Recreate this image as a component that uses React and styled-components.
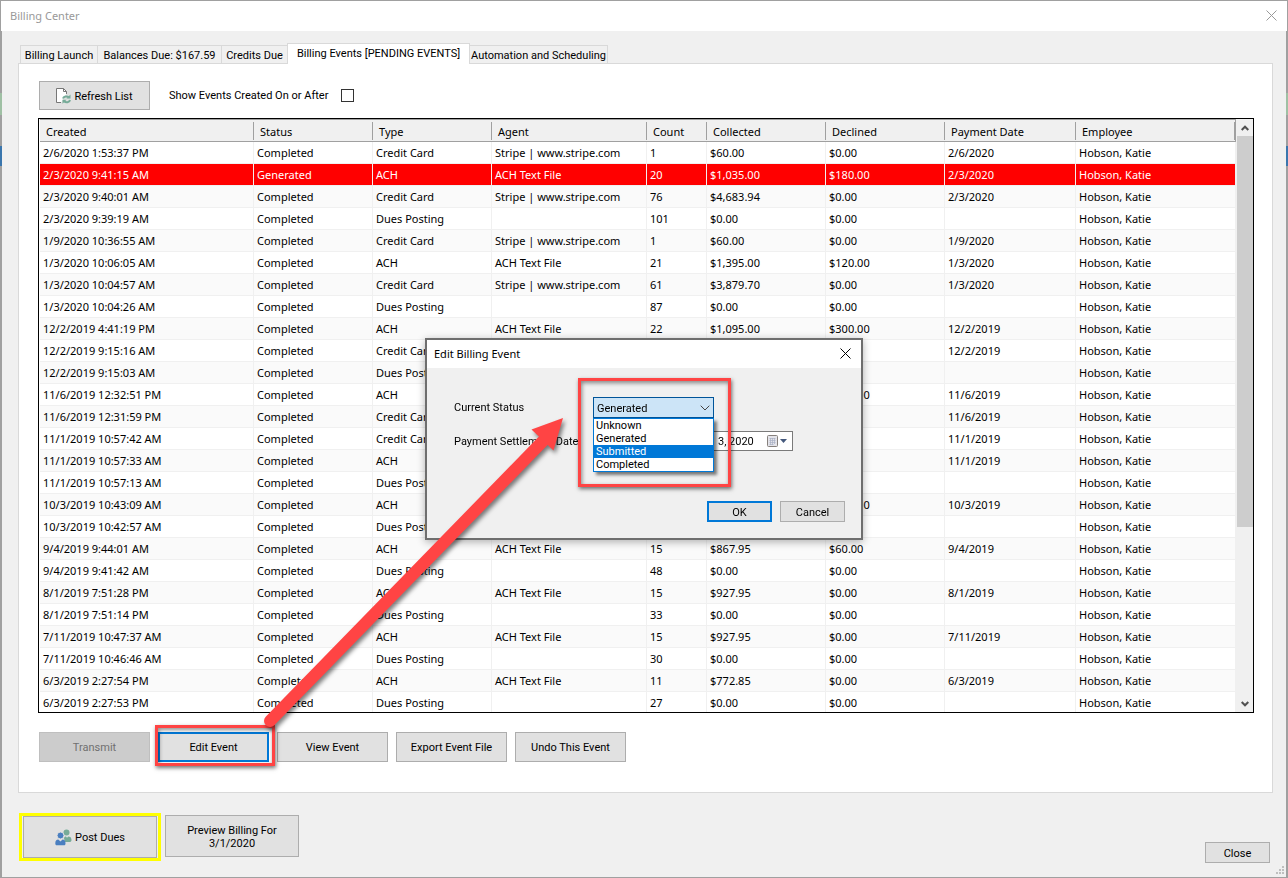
import React, { useState } from 'react';
import styled, { createGlobalStyle, css } from 'styled-components';

const GlobalStyle = createGlobalStyle`
  * {
    box-sizing: border-box;
  }

  body {
    margin: 0;
    color: #000;
    font: 11px/16px 'Noto Sans', sans-serif;
  }
`;

const uiFont = `
  font-family: 'Roboto', sans-serif;
  font-size: 11px;
  line-height: 13px;
`;

const Window = styled.div`
  position: relative;
  display: flex;
  flex-direction: column;
  height: 100vh;
  min-width: 900px;
  background: linear-gradient(
    #a0a0a0 92px,
    #9fc0a4 92px 114px,
    #a0a0a0 114px 145px,
    #3a76ad 145px 165px,
    #a0a0a0 165px
  );
  border-top: 1px solid #a0a0a0;
  border-bottom: 1px solid #a0a0a0;
`;

const TitleBar = styled.header`
  display: flex;
  justify-content: space-between;
  align-items: center;
  flex: none;
  height: 30px;
  margin: 0 1px;
  padding: 0 10px 0 9px;
  background: #fff;
  color: #999;
`;

const Title = styled.h1`
  margin: 0;
  font-size: 11px;
  font-weight: 400;
`;

const IconButton = styled.button`
  display: flex;
  padding: 0 0 2px;
  border: 0;
  background: none;
  color: inherit;
`;

const Body = styled.main`
  display: flex;
  flex-direction: column;
  flex: 1;
  min-height: 0;
  margin: 0 2px;
  padding: 12px 13px 14px 16px;
  background: #f0f0f0;
`;

const TabList = styled.div`
  display: flex;
  align-items: flex-end;
  padding-left: 2px;
`;

const Tab = styled.button`
  ${uiFont}
  flex: none;
  width: ${({ $width }) => $width}px;
  height: 18px;
  margin: 0 0 0 -1px;
  padding: 2px 0 0;
  border: 1px solid #d9d9d9;
  border-bottom: 0;
  background: #f0f0f0;
  color: #000;
  white-space: nowrap;

  &:first-child {
    margin-left: 0;
  }

  ${({ $active }) =>
    $active &&
    css`
      z-index: 1;
      height: 21px;
      margin-bottom: -1px;
      padding-bottom: 3px;
      background: #fff;
    `}
`;

const Panel = styled.section`
  display: flex;
  flex-direction: column;
  flex: 1;
  min-height: 0;
  padding: 17px 18px 30px 19px;
  border: 1px solid #d9d9d9;
  background: #fff;
`;

const Toolbar = styled.div`
  display: flex;
  align-items: center;
  gap: 19px;
  margin: 0 0 8px 1px;
`;

const Button = styled.button`
  ${uiFont}
  display: flex;
  justify-content: center;
  align-items: center;
  gap: 3px;
  flex: none;
  width: ${({ $width = 111 }) => $width}px;
  height: ${({ $height = 30 }) => $height}px;
  padding: 1px 0 0;
  border: 1px solid #adadad;
  background: #e1e1e1;
  color: #000;

  ${({ $primary }) =>
    $primary &&
    css`
      border: 2px solid #0078d7;
    `}

  &:disabled {
    border-color: #bfbfbf;
    background: #ccc;
    color: #707070;
  }
`;

const CheckLabel = styled.label`
  ${uiFont}
  display: flex;
  align-items: center;
  gap: 13px;
`;

const Checkbox = styled.input`
  appearance: none;
  width: 13px;
  height: 13px;
  margin: 0;
  border: 1px solid #333;
  background: #fff;
`;

const ListFrame = styled.div`
  display: flex;
  flex: 1;
  min-height: 0;
  border: 1px solid #000;
`;

const ListView = styled.div`
  flex: 1;
  min-width: 0;
  padding-left: 1px;
  overflow: hidden;
`;

const Table = styled.table`
  width: 100%;
  table-layout: fixed;
  border-collapse: separate;
  border-spacing: 0;
`;

const HeadCell = styled.th`
  height: 23px;
  padding: 2px 0 0 6px;
  border-top: 1px solid #a0a0a0;
  border-bottom: 1px solid #a0a0a0;
  background: linear-gradient(#a0a0a0, #a0a0a0) right center / 1px 18px
    no-repeat #f0f0f0;
  font-weight: 400;
  text-align: left;

  &:last-child {
    border-right: 1px solid #a0a0a0;
  }
`;

const Row = styled.tr`
  background: ${({ $selected }) => ($selected ? '#f00' : '#fff')};
  color: ${({ $selected }) => ($selected ? '#fff' : '#000')};

  &:nth-child(odd) {
    background: #fafafa;
  }

  &:first-child {
    background: #fff;
  }
`;

const Cell = styled.td`
  height: 22px;
  padding: 0 0 0 3px;
  border-right: 1px solid #f0f0f0;
  border-bottom: 1px solid #f0f0f0;
  white-space: nowrap;
`;

const ScrollBar = styled.div`
  display: flex;
  flex-direction: column;
  flex: none;
  width: 17px;
  padding-left: 1px;
  background: #f0f0f0;
`;

const ScrollArrow = styled.button`
  display: flex;
  justify-content: center;
  align-items: center;
  flex: none;
  height: 17px;
  padding: 0;
  border: 0;
  background: #f0f0f0;
`;

const ScrollTrack = styled.div`
  flex: 1;
`;

const ScrollThumb = styled.div`
  height: 70%;
  background: #cdcdcd;
`;

const Actions = styled.div`
  display: flex;
  gap: 8px;
  margin: 19px 0 0 1px;
`;

const Highlighted = styled.div`
  position: relative;
  display: flex;
`;

const Highlight = styled.span`
  position: absolute;
  inset: ${({ $inset }) => $inset};
  border: 3px solid #ff4444;
  box-shadow: 1px 2px 4px rgba(0, 0, 0, 0.55),
    inset 1px 2px 4px rgba(0, 0, 0, 0.45);
  pointer-events: none;
`;

const Footer = styled.footer`
  display: flex;
  align-items: flex-start;
  gap: 4px;
  margin-top: 20px;
  padding: 0 3px 0 1px;
`;

const FocusFrame = styled.div`
  padding: 0 1px;
  border: 3px solid #ff0;
`;

const FooterEnd = styled.div`
  margin: 29px 0 0 auto;
`;

const FooterItem = styled.div`
  padding-top: 2px;
`;

const Grip = styled.svg`
  position: absolute;
  right: 4px;
  bottom: 3px;
`;

const Overlay = styled.div`
  position: fixed;
  inset: 0;
  display: grid;
  place-items: center;
`;

const Dialog = styled.div`
  width: 438px;
  border: 2px solid #6e6e6e;
  background: #f0f0f0;
  box-shadow: 0 2px 8px rgba(0, 0, 0, 0.3);
`;

const DialogTitleBar = styled(TitleBar)`
  height: 28px;
  margin: 0;
  padding: 0 10px 0 7px;
  color: #000;
`;

const Form = styled.form`
  padding: 29px 16px 16px 27px;
`;

const Fields = styled.div`
  display: grid;
  grid-template-columns: 139px auto;
  row-gap: 13px;
  justify-content: start;
  align-items: center;
`;

const Label = styled.label`
  ${uiFont}
`;

const ComboBox = styled.div`
  position: relative;
  width: 121px;
`;

const Select = styled.select`
  ${uiFont}
  appearance: none;
  display: block;
  width: 100%;
  height: 21px;
  padding: 1px 3px 0;
  border: 1px solid #005499;
  border-radius: 0;
  background: #cce4f7;
  color: #000;
`;

const Chevron = styled.svg`
  position: absolute;
  top: 8px;
  right: 4px;
  pointer-events: none;
`;

const Options = styled.ul`
  ${uiFont}
  position: absolute;
  z-index: 1;
  top: 21px;
  left: 0;
  right: 0;
  margin: 0;
  padding: 0;
  border: 1px solid #0078d7;
  background: #fff;
  box-shadow: 3px 3px 3px rgba(0, 0, 0, 0.5);
  list-style: none;
`;

const Option = styled.li`
  height: 13px;
  padding-left: 2px;
  line-height: 14px;
  background: ${({ $selected }) => ($selected ? '#0078d7' : '#fff')};
  color: ${({ $selected }) => ($selected ? '#fff' : '#000')};
`;

const DateBox = styled.div`
  display: flex;
  align-items: center;
  width: 200px;
  height: 20px;
  padding-right: 5px;
  border: 1px solid #7a7a7a;
  background: #fff;
`;

const DateInput = styled.input`
  ${uiFont}
  flex: 1;
  min-width: 0;
  padding: 0 0 0 124px;
  border: 0;
  outline: 0;
  background: none;
`;

const DialogActions = styled.div`
  display: flex;
  justify-content: flex-end;
  gap: 8px;
  margin-top: 50px;
`;

const Arrow = styled.svg`
  position: absolute;
  top: 0;
  left: 0;
  pointer-events: none;
  filter: drop-shadow(2px 3px 2px rgba(0, 0, 0, 0.5));
`;

const tabs = [
  { label: 'Billing Launch', width: 78 },
  { label: 'Balances Due: $167.59', width: 125 },
  { label: 'Credits Due', width: 67 },
  { label: 'Billing Events [PENDING EVENTS]', width: 183 },
  { label: 'Automation and Scheduling', width: 139 },
];

const columns = [
  { label: 'Created', width: 214 },
  { label: 'Status', width: 119 },
  { label: 'Type', width: 119 },
  { label: 'Agent', width: 155 },
  { label: 'Count', width: 60 },
  { label: 'Collected', width: 119 },
  { label: 'Declined', width: 119 },
  { label: 'Payment Date', width: 131 },
  { label: 'Employee' },
];

const CARD = ['Credit Card', 'Stripe | www.stripe.com'];
const ACH = ['ACH', 'ACH Text File'];
const DUES = ['Dues Posting', ''];

const events = [
  ['2/6/2020 1:53:37 PM', CARD, '1', '$60.00', '$0.00', '2/6/2020'],
  ['2/3/2020 9:41:15 AM', ACH, '20', '$1,035.00', '$180.00', '2/3/2020'],
  ['2/3/2020 9:40:01 AM', CARD, '76', '$4,683.94', '$0.00', '2/3/2020'],
  ['2/3/2020 9:39:19 AM', DUES, '101', '$0.00', '$0.00', ''],
  ['1/9/2020 10:36:55 AM', CARD, '1', '$60.00', '$0.00', '1/9/2020'],
  ['1/3/2020 10:06:05 AM', ACH, '21', '$1,395.00', '$120.00', '1/3/2020'],
  ['1/3/2020 10:04:57 AM', CARD, '61', '$3,879.70', '$0.00', '1/3/2020'],
  ['1/3/2020 10:04:26 AM', DUES, '87', '$0.00', '$0.00', ''],
  ['12/2/2019 4:41:19 PM', ACH, '22', '$1,095.00', '$300.00', '12/2/2019'],
  ['12/2/2019 9:15:16 AM', CARD, '', '', '', '12/2/2019'],
  ['12/2/2019 9:15:03 AM', DUES, '', '', '', ''],
  ['11/6/2019 12:32:51 PM', ACH, '', '', '$120.00', '11/6/2019'],
  ['11/6/2019 12:31:59 PM', CARD, '', '', '', '11/6/2019'],
  ['11/1/2019 10:57:42 AM', CARD, '', '', '', '11/1/2019'],
  ['11/1/2019 10:57:33 AM', ACH, '', '', '', '11/1/2019'],
  ['11/1/2019 10:57:13 AM', DUES, '', '', '', ''],
  ['10/3/2019 10:43:09 AM', ACH, '', '', '$120.00', '10/3/2019'],
  ['10/3/2019 10:42:57 AM', DUES, '', '', '', ''],
  ['9/4/2019 9:44:01 AM', ACH, '15', '$867.95', '$60.00', '9/4/2019'],
  ['9/4/2019 9:41:42 AM', DUES, '48', '$0.00', '$0.00', ''],
  ['8/1/2019 7:51:28 PM', ACH, '15', '$927.95', '$0.00', '8/1/2019'],
  ['8/1/2019 7:51:14 PM', DUES, '33', '$0.00', '$0.00', ''],
  ['7/11/2019 10:47:37 AM', ACH, '15', '$927.95', '$0.00', '7/11/2019'],
  ['7/11/2019 10:46:46 AM', DUES, '30', '$0.00', '$0.00', ''],
  ['6/3/2019 2:27:54 PM', ACH, '11', '$772.85', '$0.00', '6/3/2019'],
  ['6/3/2019 2:27:53 PM', DUES, '27', '$0.00', '$0.00', ''],
];

const SELECTED_ROW = 1;
const statuses = ['Unknown', 'Generated', 'Submitted', 'Completed'];

const CloseIcon = () => (
  <svg width="11" height="11" viewBox="0 0 11 11">
    <path d="M.5 .5l10 10M10.5 .5l-10 10" stroke="currentColor" fill="none" />
  </svg>
);

const RefreshIcon = () => (
  <svg width="15" height="16" viewBox="0 0 15 16">
    <path d="M5 14.500H.5V.5h7l3 3V6" fill="#fff" stroke="#777" />
    <path d="M7.500 .5v3h3" fill="none" stroke="#777" />
    <path
      d="M7 10.500c.5-2 4-3 6-1M14 12c-.5 2.500-4 3-6 1.200"
      fill="none"
      stroke="#76ab98"
      strokeWidth="2"
    />
    <path d="M14.500 6.500v4h-4zM6.500 15.800v-4h4z" fill="#76ab98" />
  </svg>
);

const PeopleIcon = () => (
  <svg width="17" height="17" viewBox="0 0 17 17">
    <circle cx="11.500" cy="3.500" r="3" fill="#76ab98" />
    <path
      d="M9 9.500c0-1.500 1-2 2-2l1 1.200 1.200-1.200c2 0 3.300 1 3.300 3.500 0 1.500-1 2-2 2H10z"
      fill="#76ab98"
    />
    <circle cx="5.500" cy="6.500" r="3.500" fill="#4a7fc0" stroke="#e1e1e1" />
    <path
      d="M.3 14.500c0-3 1-4 3-4L5.500 12.500l2-2c2.200 0 3 1.200 3 4 0 1-.5 1.800-1.500 1.800H1.800c-1 0-1.500-.8-1.500-1.800z"
      fill="#4a7fc0"
    />
  </svg>
);

const CalendarIcon = () => (
  <svg width="20" height="12" viewBox="0 0 20 12">
    <rect x=".5" y=".5" width="10" height="11" rx="1" fill="#e4e4ea" stroke="#86807c" />
    <path
      d="M2.500 3.500h6M2.500 5.500h6M2.500 7.500h6M2.500 9.500h4M3.500 3v7M5.500 3v7M7.500 3v6"
      fill="none"
      stroke="#a9b0c4"
      strokeWidth=".7"
    />
    <path d="M13 4h7l-3.500 4z" fill="#44587c" />
  </svg>
);

const EventTable = () => (
  <ListFrame>
    <ListView>
      <Table>
        <colgroup>
          {columns.map(({ label, width }) => (
            <col key={label} width={width} />
          ))}
        </colgroup>
        <thead>
          <tr>
            {columns.map(({ label }) => (
              <HeadCell key={label}>{label}</HeadCell>
            ))}
          </tr>
        </thead>
        <tbody>
          {events.map(([created, [type, agent], ...rest], index) => (
            <Row key={created} $selected={index === SELECTED_ROW}>
              <Cell>{created}</Cell>
              <Cell>{index === SELECTED_ROW ? 'Generated' : 'Completed'}</Cell>
              <Cell>{type}</Cell>
              <Cell>{agent}</Cell>
              {rest.map((value, i) => (
                <Cell key={i}>{value}</Cell>
              ))}
              <Cell>Hobson, Katie</Cell>
            </Row>
          ))}
        </tbody>
      </Table>
    </ListView>
    <ScrollBar>
      <ScrollArrow aria-label="Scroll up">
        <svg width="8" height="6" viewBox="0 0 8 6">
          <path d="M.7 5L4 1.700 7.300 5" fill="none" stroke="#505050" strokeWidth="2" />
        </svg>
      </ScrollArrow>
      <ScrollTrack>
        <ScrollThumb />
      </ScrollTrack>
      <ScrollArrow aria-label="Scroll down">
        <svg width="8" height="6" viewBox="0 0 8 6">
          <path d="M.7 1L4 4.300 7.300 1" fill="none" stroke="#505050" strokeWidth="2" />
        </svg>
      </ScrollArrow>
    </ScrollBar>
  </ListFrame>
);

const EditDialog = () => {
  const [status, setStatus] = useState('Generated');

  return (
    <Overlay>
      <Dialog role="dialog" aria-labelledby="dialog-title">
        <DialogTitleBar>
          <Title as="h2" id="dialog-title">
            Edit Billing Event
          </Title>
          <IconButton aria-label="Close dialog">
            <CloseIcon />
          </IconButton>
        </DialogTitleBar>
        <Form onSubmit={event => event.preventDefault()}>
          <Fields>
            <Label htmlFor="status">Current Status</Label>
            <ComboBox>
              <Select
                id="status"
                value={status}
                onChange={event => setStatus(event.target.value)}
              >
                {statuses.map(item => (
                  <option key={item}>{item}</option>
                ))}
              </Select>
              <Chevron width="10" height="6" viewBox="0 0 10 6">
                <path d="M.7 .7L5 5 9.300 .7" fill="none" stroke="#444" />
              </Chevron>
              <Options role="listbox">
                {statuses.map(item => (
                  <Option
                    key={item}
                    role="option"
                    $selected={item === 'Submitted'}
                    onClick={() => setStatus(item)}
                  >
                    {item}
                  </Option>
                ))}
              </Options>
              <Highlight $inset="-19px -17px -69px -15px" />
            </ComboBox>
            <Label htmlFor="date">Payment Settlement Date</Label>
            <DateBox>
              <DateInput id="date" defaultValue="3, 2020" />
              <CalendarIcon />
            </DateBox>
          </Fields>
          <DialogActions>
            <Button type="submit" $width={65} $height={21} $primary>
              OK
            </Button>
            <Button type="button" $width={65} $height={21}>
              Cancel
            </Button>
          </DialogActions>
        </Form>
      </Dialog>
    </Overlay>
  );
};

const App = () => (
  <>
    <GlobalStyle />
    <Window>
      <TitleBar>
        <Title>Billing Center</Title>
        <IconButton aria-label="Close window">
          <CloseIcon />
        </IconButton>
      </TitleBar>
      <Body>
        <TabList role="tablist">
          {tabs.map(({ label, width }, index) => (
            <Tab key={label} role="tab" $width={width} $active={index === 3}>
              {label}
            </Tab>
          ))}
        </TabList>
        <Panel>
          <Toolbar>
            <Button $height={29}>
              <RefreshIcon />
              Refresh List
            </Button>
            <CheckLabel>
              Show Events Created On or After
              <Checkbox type="checkbox" />
            </CheckLabel>
          </Toolbar>
          <EventTable />
          <Actions>
            <Button disabled>Transmit</Button>
            <Highlighted>
              <Button $primary>Edit Event</Button>
              <Highlight $inset="-7px -6px -4px -3px" />
            </Highlighted>
            <Button>View Event</Button>
            <Button>Export Event File</Button>
            <Button>Undo This Event</Button>
          </Actions>
        </Panel>
        <Footer>
          <FocusFrame>
            <Button $width={134} $height={42}>
              <PeopleIcon />
              Post Dues
            </Button>
          </FocusFrame>
          <FooterItem>
            <Button $width={134} $height={42}>
              Preview Billing For
              <br />
              3/1/2020
            </Button>
          </FooterItem>
          <FooterEnd>
            <Button $width={65} $height={21}>
              Close
            </Button>
          </FooterEnd>
        </Footer>
      </Body>
      <Grip width="8" height="8" viewBox="0 0 8 8">
        <path d="M6 0h2v2h-2zM3 3h2v2h-2zM6 3h2v2h-2zM0 6h2v2h-2zM3 6h2v2h-2zM6 6h2v2h-2z" fill="#bfbfbf" />
      </Grip>
    </Window>
    <EditDialog />
    <Arrow width="600" height="760" viewBox="0 0 600 760">
      <path d="M270 721L544 440" stroke="#ff4444" strokeWidth="12" strokeLinecap="round" />
      <path d="M563 418l-31.500 11.500 22 21z" fill="#ff4444" />
    </Arrow>
  </>
);

export default App;
